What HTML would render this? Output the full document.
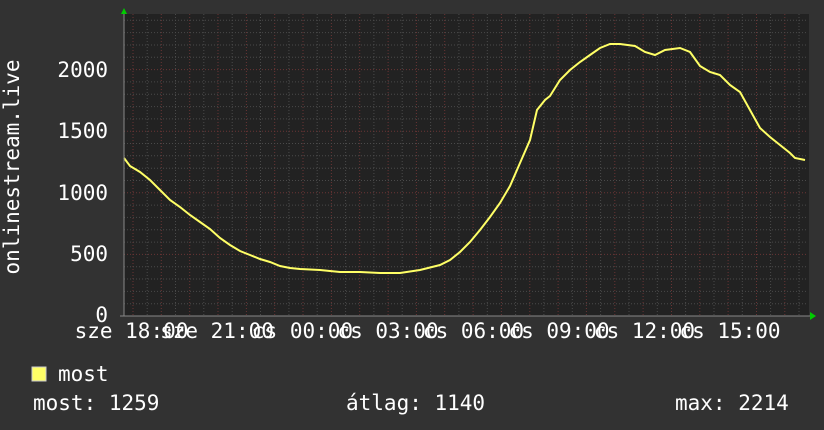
<!DOCTYPE html>
<html><head><meta charset="utf-8"><style>
html,body{margin:0;padding:0;background:#323232;width:824px;height:430px;overflow:hidden}
svg text{font-family:"DejaVu Sans Mono","Liberation Mono",monospace;font-size:21px;fill:#fff}
</style></head><body>
<svg width="824" height="430" xmlns="http://www.w3.org/2000/svg">
<rect x="0" y="0" width="824" height="430" fill="#323232"/>
<rect x="124" y="14" width="685" height="302" fill="#222"/>
<g id="grid"></g>
<polyline fill="none" stroke="#ffff66" stroke-width="2" points="124,158 130,166 140,172 150,180 160,190 170,200 180,207 190,215 200,222 210,229 220,238 230,245 240,251 250,255 260,259 270,262 280,266 290,268 300,269 320,270 340,272 360,272 380,273 400,273 420,270 440,265 450,260 460,252 470,242 480,230 490,217 500,203 510,186 520,163 530,140 537,110 545,100 550,96 560,80 570,70 580,62 590,55 600,48 610,44 620,44 635,46 645,52 655,55 665,50 680,48 690,52 700,66 710,72 720,75 730,85 740,92 750,110 760,128 770,137 780,145 790,153 795,158 805,160"/>
<line x1="124" y1="10" x2="124" y2="316" stroke="#888" stroke-width="1"/>
<line x1="120" y1="316" x2="812" y2="316" stroke="#888" stroke-width="1"/>
<polygon points="121,14 127,14 124,8" fill="#0c0"/>
<polygon points="810,312 810,320 816,316" fill="#0c0"/>
<text x="108" y="77" text-anchor="end">2000</text>
<text x="108" y="138" text-anchor="end">1500</text>
<text x="108" y="200" text-anchor="end">1000</text>
<text x="108" y="261" text-anchor="end">500</text>
<text x="108" y="322" text-anchor="end">0</text>
<text transform="translate(19,167) rotate(-90)" text-anchor="middle">onlinestream.live</text>
<g text-anchor="middle">
<text x="131.5" y="338">sze 18:00</text>
<text x="217" y="338">sze 21:00</text>
<text x="302.5" y="338">cs 00:00</text>
<text x="388" y="338">cs 03:00</text>
<text x="473.5" y="338">cs 06:00</text>
<text x="559" y="338">cs 09:00</text>
<text x="644.5" y="338">cs 12:00</text>
<text x="730" y="338">cs 15:00</text>
</g>
<rect x="32" y="367" width="14" height="14" fill="#ffff66" stroke="#ccc" stroke-width="1"/>
<text x="58" y="381">most</text>
<text x="33" y="410">most: 1259</text>
<text x="346" y="410">átlag: 1140</text>
<text x="675" y="410">max: 2214</text>
</svg>
<script>
var g=document.getElementById('grid'),s='';
for(var i=0;i<49;i++){var x=133+i*14.17;if(x>808)break;var maj=i%2==0;
s+='<line x1="'+x.toFixed(1)+'" y1="14" x2="'+x.toFixed(1)+'" y2="316" stroke="'+(maj?'#6a3434':'#4a4a4a')+'" stroke-dasharray="1,2"/>';}
for(var j=1;j<25;j++){var y=316-j*12.32;if(y<14)break;var mj=j%5==0;
s+='<line x1="124" y1="'+y.toFixed(1)+'" x2="808" y2="'+y.toFixed(1)+'" stroke="'+(mj?'#6a3434':'#4a4a4a')+'" stroke-dasharray="1,2"/>';}
g.innerHTML=s;
</script>
</body></html>
